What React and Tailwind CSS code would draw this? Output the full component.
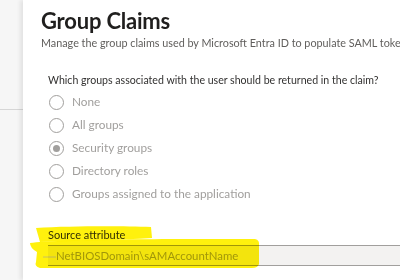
export default function App() {
  const radios = [
    { label: "None", checked: false },
    { label: "All groups", checked: false },
    { label: "Security groups", checked: true },
    { label: "Directory roles", checked: false },
    { label: "Groups assigned to the application", checked: false },
  ];

  return (
    <div
      className="relative flex h-[280px] w-[400px] overflow-hidden bg-white"
      style={{ fontFamily: 'Lato, "Noto Sans", sans-serif' }}
    >
      {/* left backdrop */}
      <div className="flex w-[23px] shrink-0 flex-col bg-[#f6f6f6]">
        <div className="h-[109px]" />
        <div className="h-px bg-[#d6d6d6]" />
      </div>

      {/* panel */}
      <div className="relative min-w-0 flex-1 bg-white pl-[18px] shadow-[-3px_0_4px_rgba(0,0,0,0.08)]">
        <h1 className="mt-[6px] whitespace-nowrap text-[22px] font-bold leading-[30px] tracking-[-0.2px] text-[#201f1e]">
          Group Claims
        </h1>
        <p className="whitespace-nowrap text-[10.8px] leading-[14px] text-[#605e5c]">
          Manage the group claims used by Microsoft Entra ID to populate SAML token
        </p>

        <p className="mt-[22px] whitespace-nowrap pl-[7px] text-[10.6px] leading-[16px] text-[#323130]">
          Which groups associated with the user should be returned in the claim?
        </p>

        <div className="mt-[6px] flex flex-col gap-[7px] pl-[8px]">
          {radios.map((r) => (
            <div key={r.label} className="flex h-[16px] items-center gap-[8px]">
              <span className="flex h-[15px] w-[15px] shrink-0 items-center justify-center rounded-full border border-[#a19f9d]">
                {r.checked && <span className="h-[7px] w-[7px] rounded-full bg-[#a19f9d]" />}
              </span>
              <span className="whitespace-nowrap text-[11.8px] text-[#a19f9d]">{r.label}</span>
            </div>
          ))}
        </div>

        <p className="mt-[25px] pl-[7px] text-[11px] leading-[16px] text-[#323130]">Source attribute</p>
        <div className="ml-[7px] mt-[2px] flex h-[21px] items-center border-y border-[#a19f9d] bg-[#f3f2f1] pl-[8px]">
          <span className="whitespace-nowrap text-[11.4px] text-[#a19f9d]">NetBIOSDomain\sAMAccountName</span>
        </div>
      </div>

      {/* highlighter marks */}
      <svg
        className="pointer-events-none absolute inset-0 mix-blend-multiply"
        width="400"
        height="280"
        viewBox="0 0 400 280"
      >
        <path
          d="M36 228 C70 226 120 226 151 227 L152 238 C120 240 80 241 40 242 Z"
          fill="#fff000"
          opacity="0.95"
        />
        <path
          d="M30 243 C60 239 150 239 255 239 Q260 240 259 246 L259 264 Q258 268 252 268 C180 268 90 268 40 268 Q34 266 36 262 L37 252 Q30 248 30 243 Z"
          fill="#fff000"
          opacity="0.95"
        />
        <line x1="43" y1="257" x2="56" y2="257" stroke="#c8c060" strokeWidth="1" />
      </svg>
    </div>
  );
}
